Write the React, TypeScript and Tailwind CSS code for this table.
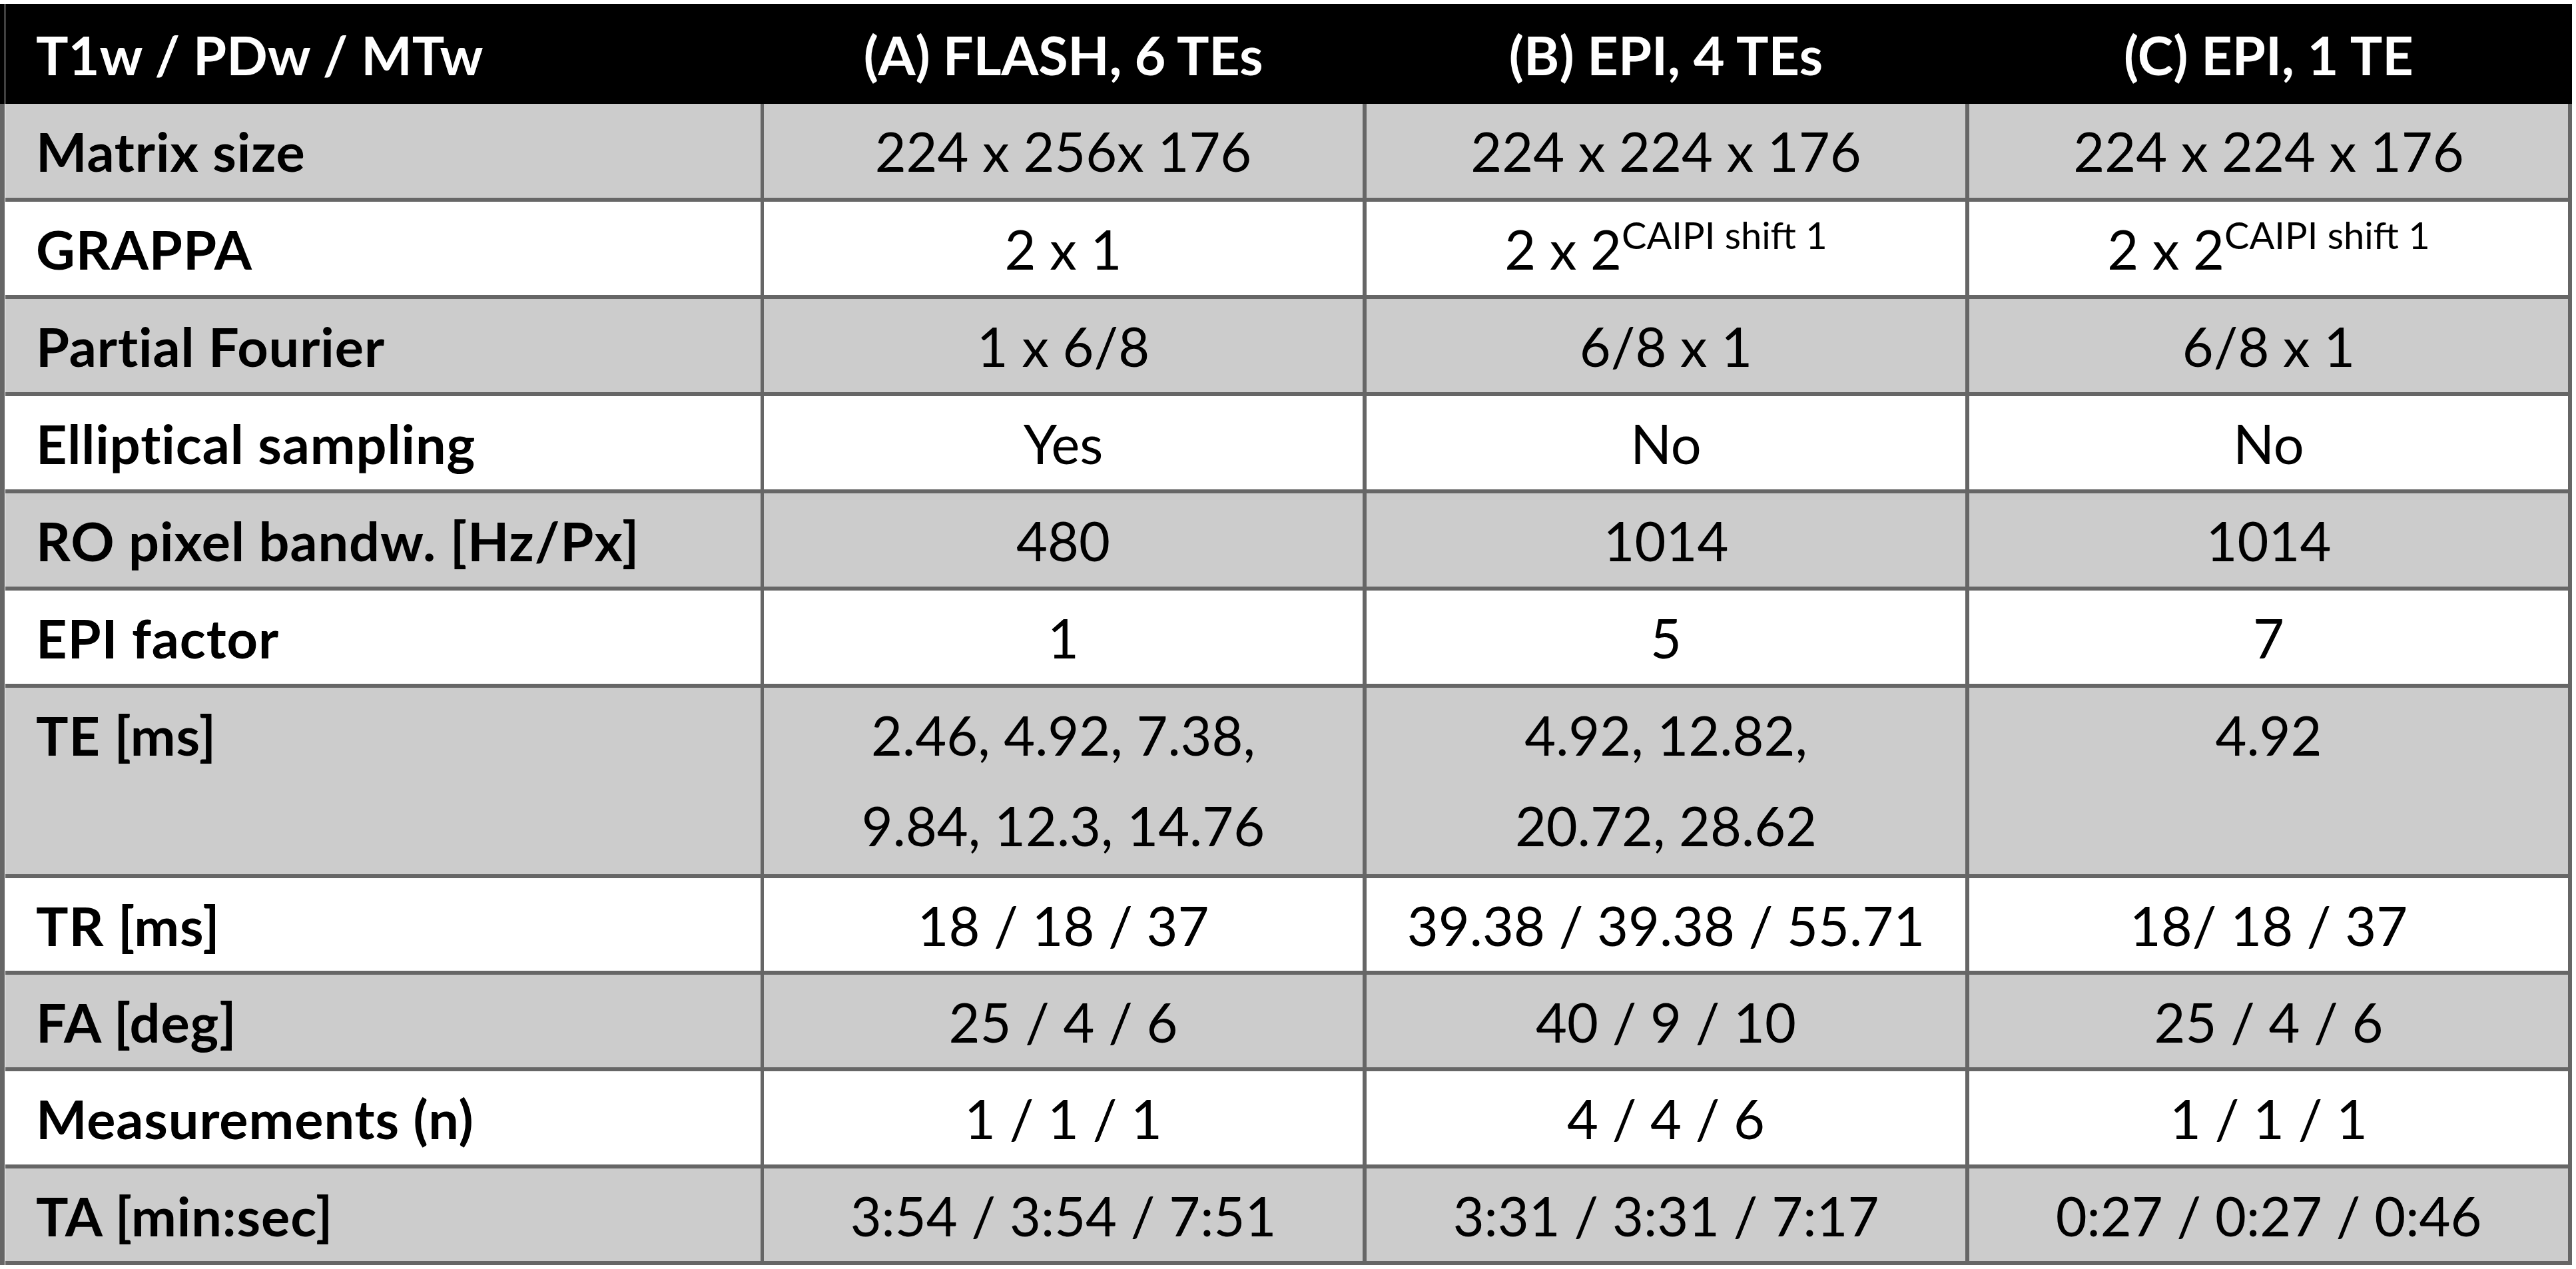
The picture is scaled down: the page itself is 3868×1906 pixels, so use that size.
import React from "react";

type Cell = React.ReactNode;

const Sup = () => (
  <span>
    2 x 2
    <span className="text-[56px] leading-[0] align-[31px]">CAIPI shift 1</span>
  </span>
);

const rows: { label: string; cells: Cell[]; h: string; gray: boolean }[] = [
  { label: "Matrix size", cells: ["224 x 256x 176", "224 x 224 x 176", "224 x 224 x 176"], h: "h-[147px]", gray: true },
  { label: "GRAPPA", cells: ["2 x 1", <Sup />, <Sup />], h: "h-[146px]", gray: false },
  { label: "Partial Fourier", cells: ["1 x 6/8", "6/8 x 1", "6/8 x 1"], h: "h-[146px]", gray: true },
  { label: "Elliptical sampling", cells: ["Yes", "No", "No"], h: "h-[146px]", gray: false },
  { label: "RO pixel bandw. [Hz/Px]", cells: ["480", "1014", "1014"], h: "h-[146px]", gray: true },
  { label: "EPI factor", cells: ["1", "5", "7"], h: "h-[146px]", gray: false },
  {
    label: "TE [ms]",
    cells: [
      <>
        <div>2.46, 4.92, 7.38,</div>
        <div>9.84, 12.3, 14.76</div>
      </>,
      <>
        <div>4.92, 12.82,</div>
        <div>20.72, 28.62</div>
      </>,
      "4.92",
    ],
    h: "h-[286px]",
    gray: true,
  },
  { label: "TR [ms]", cells: ["18 / 18 / 37", "39.38 / 39.38 / 55.71", "18/ 18 / 37"], h: "h-[145px]", gray: false },
  { label: "FA [deg]", cells: ["25 / 4 / 6", "40 / 9 / 10", "25 / 4 / 6"], h: "h-[145px]", gray: true },
  { label: "Measurements (n)", cells: ["1 / 1 / 1", "4 / 4 / 6", "1 / 1 / 1"], h: "h-[146px]", gray: false },
  { label: "TA [min:sec]", cells: ["3:54 / 3:54 / 7:51", "3:31 / 3:31 / 7:17", "0:27 / 0:27 / 0:46"], h: "h-[145px]", gray: true },
];

export default function App() {
  return (
    <div className="w-[3868px] h-[1906px] bg-white pt-[6px] font-['Lato',_sans-serif] text-[81px] leading-[136px] text-black">
      <div className="flex w-[3862px]">
        {/* left border strip */}
        <div className="w-[7px] flex flex-col">
          <div className="h-[150px] bg-black" />
          <div className="flex-1 bg-[#666666]" />
        </div>
        <div className="w-[1px] bg-white" />
        <div className="flex flex-col w-[3854px]">
          {/* header */}
          <div className="flex h-[150px] bg-black text-white font-bold">
            <div className="w-[1139px] border-r-[5px] border-black pl-[46px] pt-[8px]">T1w / PDw / MTw</div>
            <div className="w-[905px] border-r-[6px] border-black text-center pt-[8px] tracking-[-0.3px]">(A) FLASH, 6 TEs</div>
            <div className="w-[905px] border-r-[6px] border-black text-center pt-[8px]">(B) EPI, 4 TEs</div>
            <div className="w-[905px] border-r-[6px] border-black text-center pt-[8px]">(C) EPI, 1 TE</div>
          </div>
          {rows.map((r, i) => (
            <div
              key={i}
              className={`flex ${r.h} border-b-[6px] border-[#666666] ${r.gray ? "bg-[#cccccc]" : "bg-white"}`}
            >
              <div className="w-[1139px] border-r-[5px] border-[#666666] pl-[46px] pt-[3px] font-bold whitespace-nowrap tracking-[0.9px]">
                {r.label}
              </div>
              {r.cells.map((c, j) => (
                <div
                  key={j}
                  className="w-[905px] border-r-[6px] border-[#666666] text-center pt-[3px] whitespace-nowrap"
                >
                  {c}
                </div>
              ))}
            </div>
          ))}
        </div>
      </div>
    </div>
  );
}
